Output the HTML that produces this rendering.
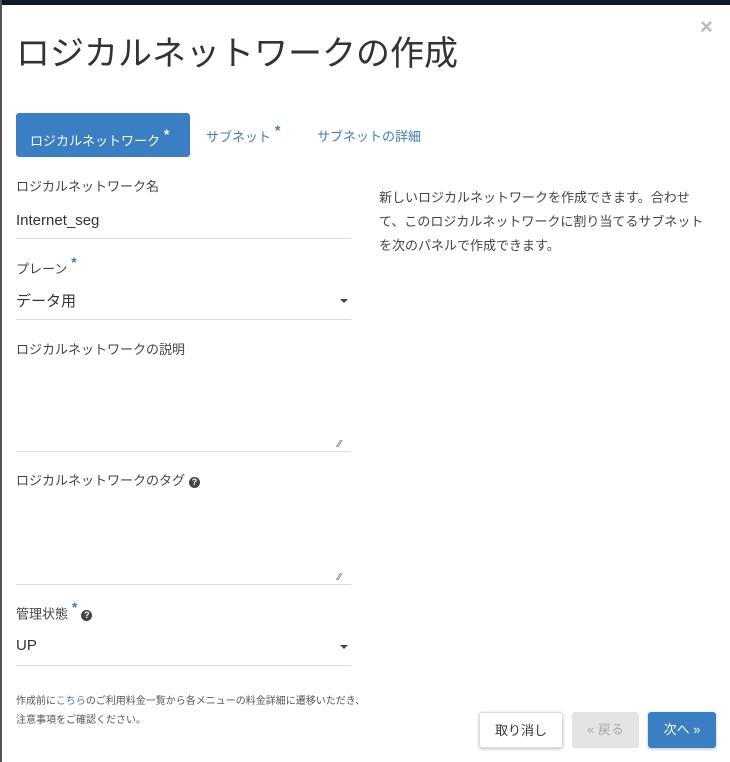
<!DOCTYPE html>
<html><head><meta charset="utf-8"><style>
*{box-sizing:border-box;margin:0;padding:0}
body{width:730px;height:762px;background:#fff;font-family:"Liberation Sans","Noto Sans CJK JP",sans-serif;color:#333;position:relative;overflow:hidden}
.top{position:absolute;left:0;top:0;width:730px;height:5px;background:#0d1a2e}
.left{position:absolute;left:0;top:0;width:2px;height:762px;background:#555}
.a{position:absolute;white-space:nowrap}
h1{position:absolute;left:16px;top:26px;font-size:34px;font-weight:normal;color:#333}
.tab1{position:absolute;left:16px;top:113px;width:174px;height:44px;background:#3a7fc4;border-radius:3px;color:#fff;font-size:13px;line-height:44px;padding-left:14px}
.blue{color:#3a7fc4}
sup{font-size:14px;font-weight:bold;position:relative;top:-1px}
.lbl{font-size:13px;color:#444}
.line{position:absolute;left:16px;width:335px;height:1px;background:#ddd}
.q{display:inline-block;width:11px;height:11px;border-radius:50%;background:#444;color:#fff;font-size:9px;line-height:11px;text-align:center;font-weight:bold;vertical-align:0px;margin-left:4px}
.caret{position:absolute;left:340px;width:0;height:0;border-left:4px solid transparent;border-right:4px solid transparent;border-top:4px solid #444}
.btn{position:absolute;top:712px;height:36px;border-radius:3px;font-size:13px;line-height:36px;text-align:center}
</style></head><body>
<div class="top"></div><div class="left"></div>
<div class="a" style="left:700px;top:14px;font-size:22px;color:#bbb;font-weight:bold">×</div>
<h1>ロジカルネットワークの作成</h1>
<div class="tab1">ロジカルネットワーク<sup> *</sup></div>
<div class="a blue" style="left:206px;top:123px;font-size:13px">サブネット<sup> *</sup></div>
<div class="a blue" style="left:317px;top:126px;font-size:13px">サブネットの詳細</div>
<div class="a lbl" style="left:16px;top:176px">ロジカルネットワーク名</div>
<div class="a" style="left:16px;top:212px;font-size:15px">Internet_seg</div>
<div class="line" style="top:238px"></div>
<div class="a lbl" style="left:16px;top:255px">プレーン<sup class="blue"> *</sup></div>
<div class="a" style="left:16px;top:290px;font-size:15px">データ用</div>
<div class="caret" style="top:299px"></div>
<div class="line" style="top:319px"></div>
<div class="a lbl" style="left:16px;top:339px">ロジカルネットワークの説明</div>
<div class="line" style="top:451px"></div>
<div class="a" style="left:338px;top:439px;font-size:10px;color:#555">⁄⁄</div>
<div class="a lbl" style="left:16px;top:470px">ロジカルネットワークのタグ<span class="q">?</span></div>
<div class="line" style="top:584px"></div>
<div class="a" style="left:338px;top:572px;font-size:10px;color:#555">⁄⁄</div>
<div class="a lbl" style="left:16px;top:600px">管理状態<sup class="blue"> *</sup><span class="q">?</span></div>
<div class="a" style="left:16px;top:637px;font-size:15px">UP</div>
<div class="caret" style="top:645px"></div>
<div class="line" style="top:665px"></div>
<div class="a" style="left:379px;top:186px;font-size:13px;line-height:24px;color:#444;white-space:normal;width:335px">新しいロジカルネットワークを作成できます。合わせて、このロジカルネットワークに割り当てるサブネットを次のパネルで作成できます。</div>
<div class="a" style="left:16px;top:692px;font-size:10px;line-height:19px;color:#555">作成前に<span class="blue">こちら</span>のご利用料金一覧から各メニューの料金詳細に遷移いただき、<br>注意事項をご確認ください。</div>
<div class="btn" style="left:479px;width:84px;background:#fff;border:1px solid #ddd;box-shadow:0 1px 3px rgba(0,0,0,.25);color:#333">取り消し</div>
<div class="btn" style="left:572px;width:67px;background:#e4e4e4;color:#aaa">« 戻る</div>
<div class="btn" style="left:648px;width:68px;background:#3a7fc4;color:#fff;box-shadow:0 1px 3px rgba(0,0,0,.25)">次へ »</div>
</body></html>
